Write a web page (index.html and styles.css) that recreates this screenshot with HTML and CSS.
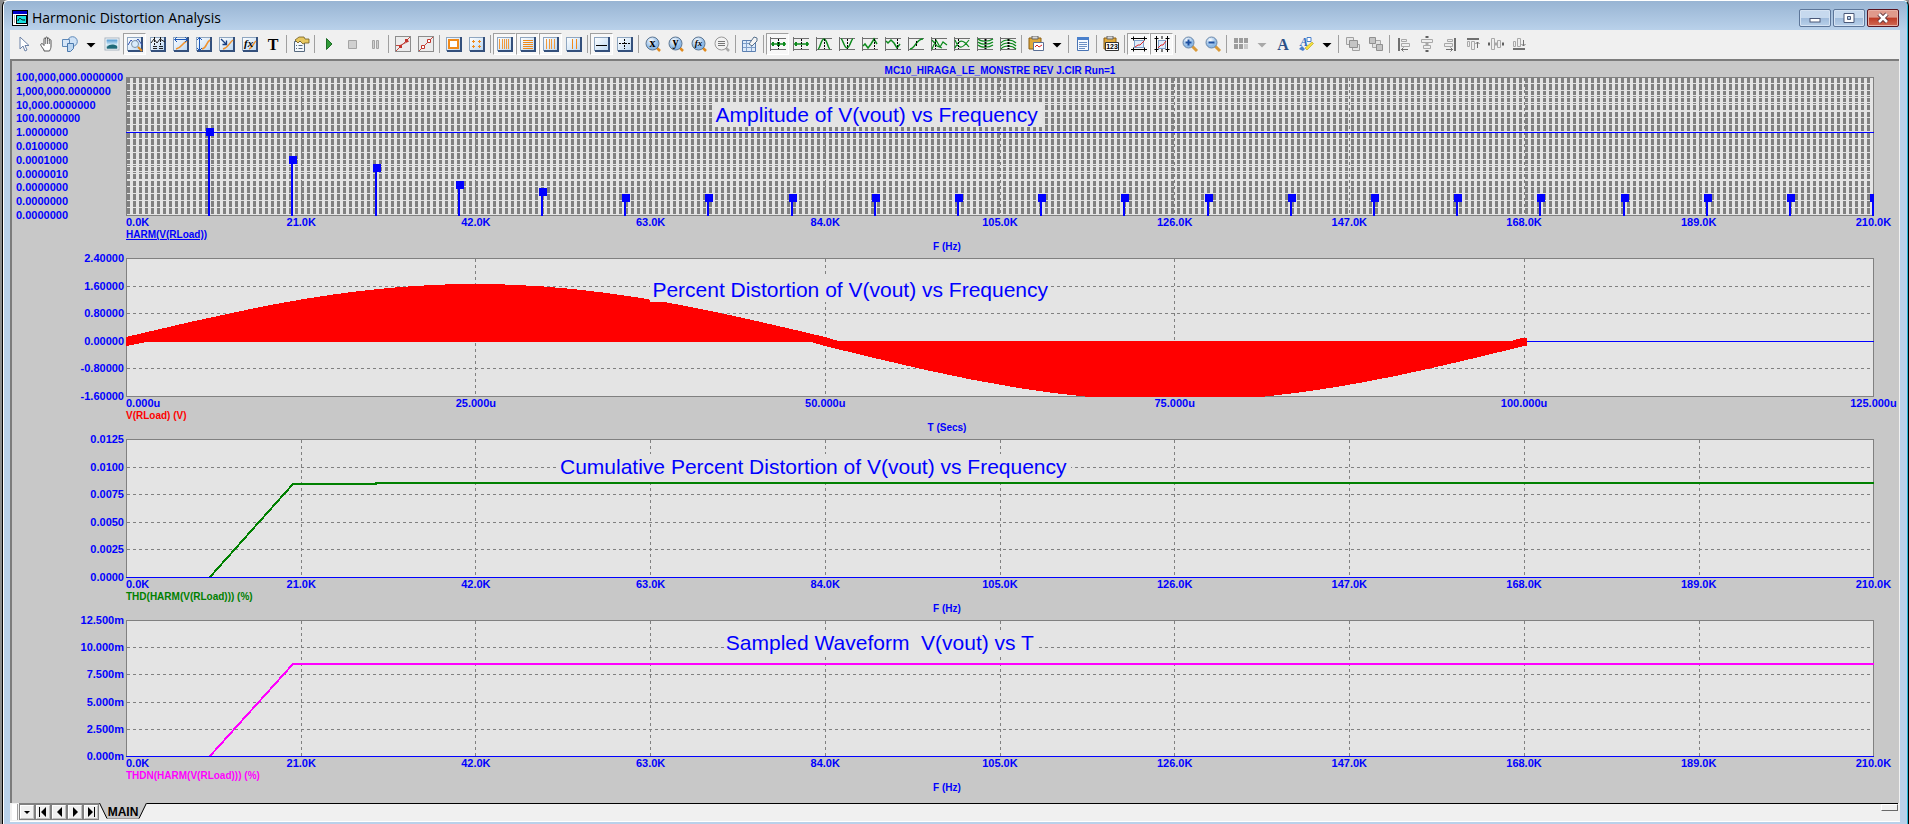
FILE: index.html
```html
<!DOCTYPE html>
<html lang="en">
<head>
<meta charset="utf-8">
<title>Harmonic Distortion Analysis</title>
<link rel="stylesheet" href="styles.css">
</head>
<body>
<svg class="sprite" aria-hidden="true">
  <defs>
    <linearGradient id="pane" x1="0" y1="0" x2="1" y2="1"><stop offset="0" stop-color="#ffffff"/><stop offset="1" stop-color="#bcd8f2"/></linearGradient>
    <linearGradient id="sky" x1="0" y1="0" x2="0" y2="1"><stop offset="0" stop-color="#4f97d0"/><stop offset=".6" stop-color="#d8eef8"/><stop offset="1" stop-color="#2b6f86"/></linearGradient>
    <radialGradient id="ball" cx=".4" cy=".3"><stop offset="0" stop-color="#ffffff"/><stop offset="1" stop-color="#8db9e6"/></radialGradient>
  </defs>
  <symbol id="frame" viewBox="0 0 16 16"><rect x=".5" y="1.500" width="14" height="13" fill="url(#pane)" stroke="#8fa6c0"/><path d="M1 15h15M15 1v14" stroke="#34507c" stroke-width="2" fill="none"/></symbol>
  <symbol id="graph" viewBox="0 0 16 16"><path d="M.5 1v14M0 2.500h16M0 13.500h16" stroke="#707070" fill="none"/></symbol>
  <symbol id="lens" viewBox="0 0 16 16"><path d="M12 12l3 3" stroke="#e08a1e" stroke-width="2.500"/><circle cx="7.500" cy="7.500" r="6.500" fill="url(#ball)" stroke="#5f7893"/></symbol>
  <symbol id="clip" viewBox="0 0 16 16"><path d="M1 2h12v11H1z" fill="#e0a93a" stroke="#8a5f14"/><path d="M4 0h6v3H4z" fill="#d9d9d9" stroke="#666"/></symbol>
</svg>

<main class="window">
  <header class="titlebar">
    <svg class="app-icon" viewBox="0 0 16 16" aria-hidden="true"><rect x=".5" y=".5" width="15" height="15" fill="#fff" stroke="#000"/><path d="M1 1h14v3H1z" fill="#0000c8"/><path d="M2 6h1M2 8h1M2 10h1M2 12h1" stroke="#777"/><rect x="4.500" y="5.500" width="10" height="8" fill="#19e0e0" stroke="#000"/><path d="M6 11c1-3 2-3 3-2s2 1 4 1" stroke="#000" fill="none"/></svg>
    <h1>Harmonic Distortion Analysis</h1>
    <div class="window-buttons">
      <button aria-label="Minimize"><svg viewBox="0 0 12 12"><rect x="1" y="6.500" width="10" height="3.500" fill="#fff" stroke="#4a5878"/></svg></button>
      <button aria-label="Maximize"><svg viewBox="0 0 12 12"><path fill-rule="evenodd" d="M1 1.500h10v9H1zM4.500 4.500v3h3v-3z" fill="#fff" stroke="#4a5878"/></svg></button>
      <button class="close" aria-label="Close"><svg viewBox="0 0 12 12"><path d="M2 2l8 8M10 2l-8 8" stroke="#5a3038" stroke-width="4.500"/><path d="M2 2l8 8M10 2l-8 8" stroke="#fff" stroke-width="2.500"/></svg></button>
    </div>
  </header>

  <div class="client">
    <nav class="toolbar" aria-label="Analysis tools">
      <button aria-label="Select"><svg viewBox="0 0 16 16"><path d="M4 1v12l3-3 2 5 2-1-2-4.500h4z" fill="#fff" stroke="#6d83a8"/></svg></button>
      <button aria-label="Pan"><svg viewBox="0 0 16 16"><path d="M5 14C3 11 1 9 2 8s2 0 3 1.500V3c0-1.300 1.700-1.300 1.700 0V2c0-1.300 1.800-1.300 1.800 0v1c0-1.200 1.800-1.200 1.800 0v1.500c0-1.200 1.700-1.200 1.700 0V10c0 2-.500 3-1.500 5H5z" fill="#fff" stroke="#555"/><path d="M6.700 3v5M8.500 3v5M10.300 4v4" stroke="#777"/></svg></button>
      <button aria-label="Shapes"><svg viewBox="0 0 16 16"><circle cx="10.500" cy="5.500" r="4.800" fill="#cfe2f6" stroke="#5d88b8"/><path d="M.5 3.500h7v7h-7z" fill="#d6e6f8" stroke="#5d88b8"/><path d="M5.500 7.500h6v5l-3 3h-3z" fill="#bcd6f0" stroke="#4a78ac"/></svg></button>
      <button class="drop" aria-label="More shapes"><svg viewBox="0 0 10 16"><path d="M.5 7h9L5 11.500z"/></svg></button>
      <button aria-label="Picture"><svg viewBox="0 0 16 16"><rect x="1" y="2" width="14" height="12" fill="#fff" stroke="#a8b4c0"/><rect x="2.500" y="3.500" width="11" height="9" fill="url(#sky)"/><path d="M3 11c3-3 6-3 10-1v2.500H3z" fill="#1f6a78"/></svg></button>
      <button class="on" aria-label="Scale mode"><svg viewBox="0 0 16 16"><use href="#frame"/><path d="M1 9l3-5 3 3 4-4 4 6" stroke="#3453b0" fill="none"/><circle cx="8" cy="8" r="3.500" fill="#d9ebfb" stroke="#7d93a8"/><path d="M11 11l4 4" stroke="#e08a1e" stroke-width="2"/></svg></button>
      <button aria-label="Cursor mode"><svg viewBox="0 0 16 16"><use href="#frame"/><path d="M1 7l3-4 3 4 3-4 5 3" stroke="#222" fill="none"/><path d="M4.500 1v8M10.500 1v8" stroke="#111" stroke-dasharray="2 1"/><path d="M3 10.500h4M9 10.500h4M3 12.500h4M9 12.500h4" stroke="#222"/></svg></button>
      <button aria-label="Horizontal tag"><svg viewBox="0 0 16 16"><use href="#frame"/><path d="M3 13c6-1 6-6 11-8" stroke="#f0922c" stroke-width="1.500" fill="none"/><path d="M2 3.500h12M4 1L1.500 3.500 4 6M12 1l2.500 2.500L12 6" stroke="#1c57b8" fill="none"/></svg></button>
      <button aria-label="Vertical tag"><svg viewBox="0 0 16 16"><use href="#frame"/><path d="M6 13c5-1 4-7 8-9" stroke="#f0922c" stroke-width="1.500" fill="none"/><path d="M3.500 1v14M1 4l2.500-2.500L6 4M1 12l2.500 2.500L6 12" stroke="#1c57b8" fill="none"/></svg></button>
      <button aria-label="Tag"><svg viewBox="0 0 16 16"><use href="#frame"/><path d="M4 13c5-1 6-6 10-9" stroke="#f0922c" stroke-width="1.500" fill="none"/><path d="M2 3l5 5M7.500 4.500V8.500H3.500" stroke="#173e80" stroke-width="1.300" fill="none"/></svg></button>
      <button aria-label="Performance tag"><svg viewBox="0 0 16 16"><use href="#frame"/><path d="M7 13c4-1 4-6 7-8" stroke="#f0922c" stroke-width="1.500" fill="none"/><text x="2" y="11" class="glyph-fx">fx</text></svg></button>
      <button aria-label="Text"><svg viewBox="0 0 16 16"><text x="8" y="14" class="glyph-t">T</text></svg></button>
      <span class="sep"></span>
      <button aria-label="Properties"><svg viewBox="0 0 16 16"><path d="M1.500 5.500h10v10h-10z" fill="#f4f8fc" stroke="#56697e"/><path d="M3 9.500h1M5.500 9.500h4M3 12.500h1M5.500 12.500h4" stroke="#56697e"/><path d="M2 4l4-3h5l1 2h4v4h-4l-2 1-3-3-2 2z" fill="#e8c860" stroke="#6e5a20" stroke-width=".8"/></svg></button>
      <span class="sep"></span>
      <button aria-label="Run"><svg viewBox="0 0 16 16"><path d="M5.500 2.500v11l5.500-5.500z" fill="#2f9a38" stroke="#1d6e26"/></svg></button>
      <button aria-label="Stop"><svg viewBox="0 0 16 16"><path d="M4.500 4.500h8v8h-8z" fill="#d0d0d0" stroke="#a4a4a4"/></svg></button>
      <button aria-label="Pause"><svg viewBox="0 0 16 16"><path d="M5.500 4.500h2v8h-2zM9.500 4.500h2v8h-2z" fill="#d0d0d0" stroke="#a4a4a4"/></svg></button>
      <span class="sep"></span>
      <button aria-label="Data points"><svg viewBox="0 0 16 16"><rect x=".5" y=".5" width="15" height="15" fill="#ececec" stroke="#8c8c8c"/><path d="M1 15L15 1M1 9.500h4L14 5" stroke="#c24a42" fill="none"/><path d="M4 9h3v3H4zM10 3h3v3h-3z" fill="#c2342c"/></svg></button>
      <button aria-label="Tokens"><svg viewBox="0 0 16 16"><rect x=".5" y=".5" width="15" height="15" fill="#ececec" stroke="#8c8c8c"/><path d="M1 15L15 1" stroke="#c24a42"/><path d="M3.500 9.500h3v3h-3zM9.500 3.500h3v3h-3z" fill="#fff" stroke="#c2342c"/></svg></button>
      <span class="sep"></span>
      <button aria-label="Ruler"><svg viewBox="0 0 16 16"><use href="#frame"/><rect x="3" y="4" width="9" height="8" fill="#fff" stroke="#f08a1c" stroke-width="2"/></svg></button>
      <button aria-label="Plus marks"><svg viewBox="0 0 16 16"><use href="#frame"/><path d="M3 5.500h3M4.500 4v3M9 5.500h3M10.500 4v3M3 10.500h3M4.500 9v3M9 10.500h3M10.500 9v3" stroke="#f08a1c"/></svg></button>
      <span class="sep"></span>
      <button class="on" aria-label="Horizontal axis grids"><svg viewBox="0 0 16 16"><use href="#frame"/><path d="M2.500 3v10M5.500 3v10M7.500 3v10M9.500 3v10M11.500 3v10" stroke="#f09a3c"/></svg></button>
      <button class="on" aria-label="Vertical axis grids"><svg viewBox="0 0 16 16"><use href="#frame"/><path d="M3 4.500h10M3 6.500h10M3 8.500h10M3 10.500h10M3 12.500h10" stroke="#f08a1c"/></svg></button>
      <button class="on" aria-label="Minor log grids"><svg viewBox="0 0 16 16"><use href="#frame"/><path d="M3.500 3v10M6.500 3v10M8.500 3v10M11.500 3v10" stroke="#f09a3c"/></svg></button>
      <button aria-label="Major log grids"><svg viewBox="0 0 16 16"><use href="#frame"/><path d="M6.500 3v10M10.500 3v10" stroke="#f08a1c"/></svg></button>
      <span class="sep"></span>
      <button class="on" aria-label="Baseline"><svg viewBox="0 0 16 16"><use href="#frame"/><path d="M2 9.500h11" stroke="#000"/></svg></button>
      <button aria-label="Horizontal cursor"><svg viewBox="0 0 16 16"><use href="#frame"/><path d="M2 7.500h11M7.500 3v10" stroke="#000" stroke-dasharray="2 1"/></svg></button>
      <span class="sep"></span>
      <button aria-label="Go to X"><svg viewBox="0 0 16 16"><use href="#lens"/><text x="7.500" y="11" class="glyph-lens">x</text></svg></button>
      <button aria-label="Go to Y"><svg viewBox="0 0 16 16"><use href="#lens"/><text x="7.500" y="10" class="glyph-lens">y</text></svg></button>
      <button aria-label="Go to performance"><svg viewBox="0 0 16 16"><use href="#lens"/><text x="7.500" y="10" class="glyph-lens slim">fx</text></svg></button>
      <button aria-label="Go to branch"><svg viewBox="0 0 16 16"><path d="M12 12l3 3" stroke="#aaa" stroke-width="2.500"/><circle cx="7.500" cy="7.500" r="6.500" fill="#f2f2f2" stroke="#999"/><path d="M4 5.500h7M4 7.500h7M4 9.500h7" stroke="#777"/></svg></button>
      <span class="sep"></span>
      <button aria-label="Clear accumulated plots"><svg viewBox="0 0 16 16"><path d="M.5 4.500h13v11H.5z" fill="#dceafa" stroke="#5b7fb0"/><path d="M1 7.500h12M1 11.500h12M4.500 5v10M9.500 5v10" stroke="#7f9fca"/><path d="M7 8l5-7 3 1v3l-5 5z" fill="#f4f4f4" stroke="#56708c"/></svg></button>
      <span class="sep"></span>
      <button class="on" aria-label="Next simulation point"><svg viewBox="0 0 16 16"><use href="#graph"/><path d="M1 8h15" stroke="#0c8a1c" stroke-width="1.500"/><path d="M2 6h2v4H2zM7 6h3v4H7zM13 6h2v4h-2z" fill="#0c8a1c"/><path d="M8.500 3v10" stroke="#000" stroke-dasharray="2 1"/></svg></button>
      <button aria-label="Next interpolated point"><svg viewBox="0 0 16 16"><use href="#graph"/><path d="M1 8h15" stroke="#0c8a1c" stroke-width="1.500"/><path d="M2 6h2v4H2zM13 6h2v4h-2z" fill="#0c8a1c"/><path d="M8.500 3v10" stroke="#000" stroke-dasharray="2 1"/></svg></button>
      <button aria-label="Peak"><svg viewBox="0 0 16 16"><use href="#graph"/><path d="M2 13c2 0 3-10 6-10s4 10 6 10" stroke="#0c8a1c" stroke-width="1.500" fill="none"/><path d="M8.500 3v10" stroke="#000" stroke-dasharray="2 1"/></svg></button>
      <button aria-label="Valley"><svg viewBox="0 0 16 16"><use href="#graph"/><path d="M2 3c2 0 3 9 6 9s4-9 6-9" stroke="#0c8a1c" stroke-width="1.500" fill="none"/><path d="M8.500 3v10" stroke="#000" stroke-dasharray="2 1"/></svg></button>
      <button aria-label="High"><svg viewBox="0 0 16 16"><use href="#graph"/><path d="M1 10l2-2 3 4 3-4 3-5 3 5" stroke="#0c8a1c" stroke-width="1.500" fill="none"/><path d="M12.500 3v10" stroke="#000" stroke-dasharray="2 1"/></svg></button>
      <button aria-label="Low"><svg viewBox="0 0 16 16"><use href="#graph"/><path d="M1 5l2 2 3-3 3 3 3 5 3-4" stroke="#0c8a1c" stroke-width="1.500" fill="none"/><path d="M12.500 3v10" stroke="#000" stroke-dasharray="2 1"/></svg></button>
      <button aria-label="Inflection"><svg viewBox="0 0 16 16"><use href="#graph"/><path d="M2 13c5 0 6-10 13-10" stroke="#0c8a1c" stroke-width="1.500" fill="none"/><path d="M8.500 5v6" stroke="#000" stroke-dasharray="2 1"/></svg></button>
      <button aria-label="Global high"><svg viewBox="0 0 16 16"><use href="#graph"/><path d="M1 13l4-9 4 7 3-5 4 3M1 4l5 6 5 2" stroke="#0c8a1c" stroke-width="1.200" fill="none"/><path d="M4.500 3v10" stroke="#000" stroke-dasharray="2 1"/></svg></button>
      <button aria-label="Global low"><svg viewBox="0 0 16 16"><use href="#graph"/><path d="M1 4c4 10 7 9 14 0M1 12c4-9 8-9 14-1" stroke="#0c8a1c" stroke-width="1.200" fill="none"/><path d="M4.500 3v10" stroke="#000" stroke-dasharray="2 1"/></svg></button>
      <button aria-label="Top branch"><svg viewBox="0 0 16 16"><use href="#graph"/><path d="M1 3c3 3 11 3 15 0M1 6c3 3 11 3 15 0M1 9c3 3 11 3 15 0" stroke="#0c8a1c" stroke-width="1.200" fill="none"/><path d="M8.500 3v10" stroke="#000" stroke-width="2" stroke-dasharray="2 1"/></svg></button>
      <button aria-label="Bottom branch"><svg viewBox="0 0 16 16"><use href="#graph"/><path d="M1 7c3-4 11-4 15 0M1 10c3-4 11-4 15 0M1 13c3-4 11-4 15 0" stroke="#0c8a1c" stroke-width="1.200" fill="none"/><path d="M8.500 3v10" stroke="#000" stroke-width="2" stroke-dasharray="2 1"/></svg></button>
      <span class="sep"></span>
      <button aria-label="Copy plot"><svg viewBox="0 0 16 16"><use href="#clip"/><path d="M5.500 6.500h10v8h-10z" fill="#fff" stroke="#5a6f94"/><path d="M7 11l2-2 2 2 3-2" stroke="#d22" fill="none"/></svg></button>
      <button class="drop" aria-label="Copy options"><svg viewBox="0 0 10 16"><path d="M.5 7h9L5 11.500z"/></svg></button>
      <span class="sep"></span>
      <button aria-label="Numeric output"><svg viewBox="0 0 16 16"><path d="M2.500 1.500h11v13h-11z" fill="#f6faff" stroke="#4a74b4"/><path d="M2 1h12v3H2z" fill="#4a80cc"/><path d="M4 6.500h8M4 8.500h8M4 10.500h8M4 12.500h6" stroke="#6c8fc4"/></svg></button>
      <span class="sep"></span>
      <button aria-label="Copy values"><svg viewBox="0 0 16 16"><use href="#clip"/><path d="M2.500 6.500h13v8h-13z" fill="#fff" stroke="#333"/><text x="9" y="13" class="glyph-num">123</text></svg></button>
      <span class="sep"></span>
      <button class="on" aria-label="Same Y scales"><svg viewBox="0 0 16 16"><rect x="3.500" y="4.500" width="9" height="7" fill="#dcecfb" stroke="#7f9fca"/><path d="M4 11l3-2 2 0 4-4" stroke="#d22" fill="none"/><path d="M0 2.500h16M0 13.500h16M2.500 .5v4M13.500 .5v4M2.500 11.500v4M13.500 11.500v4" stroke="#000"/></svg></button>
      <button class="on" aria-label="Same X scales"><svg viewBox="0 0 16 16"><rect x="4.500" y="4.500" width="7" height="8" fill="#dcecfb" stroke="#7f9fca"/><path d="M4 12l3-3 2 0 3-4" stroke="#d22" fill="none"/><path d="M2.500 0v16M13.500 0v16M.5 2.500h4M11.500 2.500h4M.5 13.500h4M11.500 13.500h4M8 0v3M8 13v3" stroke="#000"/></svg></button>
      <span class="sep"></span>
      <button aria-label="Zoom in"><svg viewBox="0 0 16 16"><path d="M10 10l5 5" stroke="#d99a3a" stroke-width="3"/><circle cx="6.500" cy="6.500" r="5.500" fill="url(#ball)" stroke="#6c87a8"/><path d="M3.500 6.500h6M6.500 3.500v6" stroke="#1c4fa0" stroke-width="2"/></svg></button>
      <button aria-label="Zoom out"><svg viewBox="0 0 16 16"><path d="M10 10l5 5" stroke="#d99a3a" stroke-width="3"/><circle cx="6.500" cy="6.500" r="5.500" fill="url(#ball)" stroke="#6c87a8"/><path d="M3.500 6.500h6" stroke="#1c4fa0" stroke-width="2"/></svg></button>
      <span class="sep"></span>
      <button aria-label="Color grid"><svg viewBox="0 0 16 16"><path d="M1 2h4v5H1zM6 2h4v5H6zM11 2h4v5h-4zM1 8h4v5H1zM6 8h4v5H6z" fill="#9c9c9c"/><path d="M11 8h4v5h-4z" fill="#c8c8c8"/></svg></button>
      <button class="drop dim" aria-label="Color options"><svg viewBox="0 0 10 16"><path d="M.5 7h9L5 11.500z"/></svg></button>
      <button aria-label="Font"><svg viewBox="0 0 16 16"><text x="8" y="14" class="glyph-a">A</text></svg></button>
      <button aria-label="Text style"><svg viewBox="0 0 16 16"><text x="6" y="10" class="glyph-style">A</text><path d="M9 1.500h4v4H9z" fill="#fff" stroke="#4a80cc"/><path d="M7 12l7-6 1.500 1.500L9 14z" fill="#f4e03c" stroke="#b09c1c" stroke-width=".6"/><path d="M1 13l3-3 3 3-2 2z" fill="#4a80cc"/></svg></button>
      <button class="drop" aria-label="Style options"><svg viewBox="0 0 10 16"><path d="M.5 7h9L5 11.500z"/></svg></button>
      <span class="sep"></span>
      <button aria-label="Bring to front"><svg viewBox="0 0 16 16"><path d="M1.500 1.500h7v7h-7zM7.500 8.500h7v6h-7z" fill="#e6e6e6" stroke="#a0a0a0"/><path d="M4.500 4.500h8v7h-8z" fill="#c4c4c4" stroke="#909090"/></svg></button>
      <button aria-label="Send to back"><svg viewBox="0 0 16 16"><path d="M4.500 4.500h8v7h-8z" fill="#e2e2e2" stroke="#a8a8a8"/><path d="M1.500 1.500h6v6h-6zM8.500 8.500h6v6h-6z" fill="#c4c4c4" stroke="#909090"/></svg></button>
      <span class="sep"></span>
      <button aria-label="Align left"><svg viewBox="0 0 16 16"><path d="M2 2h2v13H2z" fill="#707070"/><path d="M5.500 3.500h5v2h-5zM5.500 7.500h8v3h-8z" fill="#eee" stroke="#a8a8a8"/><path d="M5 13.500h7M7.500 11.500l-2 2 2 2" stroke="#707070" fill="none"/></svg></button>
      <button aria-label="Center vertically"><svg viewBox="0 0 16 16"><path d="M6.500 0h3v2h-3zM6.500 14h3v2h-3zM6.500 7.500h3v1h-3z" fill="#606060"/><path d="M2.500 3.500h11v3h-11zM4.500 9.500h7v3h-7z" fill="#eee" stroke="#a8a8a8"/></svg></button>
      <button aria-label="Align right"><svg viewBox="0 0 16 16"><path d="M12 2h2v13h-2z" fill="#707070"/><path d="M5.500 3.500h5v2h-5zM2.500 7.500h8v3h-8z" fill="#eee" stroke="#a8a8a8"/><path d="M4 13.500h7M8.500 11.500l2 2-2 2" stroke="#707070" fill="none"/></svg></button>
      <button aria-label="Align top"><svg viewBox="0 0 16 16"><path d="M2 2h12v2H2z" fill="#707070"/><path d="M2.500 5.500h2v5h-2zM6.500 5.500h3v8h-3z" fill="#eee" stroke="#a8a8a8"/><path d="M12.500 12V6M10.500 8l2-2 2 2" stroke="#707070" fill="none"/></svg></button>
      <button aria-label="Center horizontally"><svg viewBox="0 0 16 16"><path d="M0 6.500h2v3H0zM14 6.500h2v3h-2zM7.500 6.500h1v3h-1z" fill="#606060"/><path d="M3.500 2.500h3v11h-3zM9.500 4.500h3v7h-3z" fill="#eee" stroke="#a8a8a8"/></svg></button>
      <button aria-label="Align bottom"><svg viewBox="0 0 16 16"><path d="M2 12h12v2H2z" fill="#707070"/><path d="M2.500 5.500h2v5h-2zM6.500 2.500h3v8h-3z" fill="#eee" stroke="#a8a8a8"/><path d="M12.500 4v6M10.500 8l2 2 2-2" stroke="#707070" fill="none"/></svg></button>
    </nav>

    <div class="plots">
      <h2 class="run-title">MC10_HIRAGA_LE_MONSTRE REV J.CIR Run=1</h2>

      <section class="chart">
        <ul class="y-axis start">
          <li>100,000,000.0000000</li><li>1,000,000.0000000</li><li>10,000.0000000</li><li>100.0000000</li><li>1.0000000</li><li>0.0100000</li><li>0.0001000</li><li>0.0000010</li><li>0.0000000</li><li>0.0000000</li><li>0.0000000</li>
        </ul>
        <div class="plot">
          <svg viewBox="0 0 1748 139" preserveAspectRatio="none" aria-hidden="true">
            <defs><pattern id="ticks" width="6" height="139" patternUnits="userSpaceOnUse"><rect x="1" width="3" height="139" fill="#808080"/></pattern></defs>
            <rect width="1748" height="139" fill="url(#ticks)"/>
            <path class="gaps" d="M0 6.500H1748M0 13.500H1748M0 18.500H1748M0 20.500H1748M0 25.500H1748M0 27.500H1748M0 33.500H1748M0 34.500H1748M0 40.500H1748M0 47.500H1748M0 54.500H1748M0 61.500H1748M0 68.500H1748M0 75.500H1748M0 82.500H1748M0 87.500H1748M0 89.500H1748M0 94.500H1748M0 96.500H1748M0 102.500H1748M0 103.500H1748M0 109.500H1748M0 116.500H1748M0 123.500H1748M0 130.500H1748M0 137.500H1748"/>
            <path class="grid" d="M175.500 1V138M349.500 1V138M524.500 1V138M699.500 1V138M874.500 1V138M1048.500 1V138M1223.500 1V138M1398.500 1V138M1573.500 1V138"/>
            <rect class="edge" x=".5" y=".5" width="1747" height="138"/>
            <path class="zero" d="M0 55.500H1748"/>
            <path class="stems" d="M83 55V139M166 83V139M250 91V139M333 108V139M416 115V139M499 121V139M582 121V139M666 121V139M749 121V139M832 121V139M915 121V139M998 121V139M1082 121V139M1165 121V139M1248 121V139M1331 121V139M1414 121V139M1498 121V139M1581 121V139M1664 121V139M1747 121V139"/>
            <path class="heads" d="M80 55h8M163 83h8M247 91h8M330 108h8M413 115h8M496 121h8M579 121h8M663 121h8M746 121h8M829 121h8M912 121h8M995 121h8M1079 121h8M1162 121h8M1245 121h8M1328 121h8M1411 121h8M1495 121h8M1578 121h8M1661 121h8M1744 121h8"/>
          </svg>
          <h3 class="caption amplitude">Amplitude of V(vout) vs Frequency</h3>
        </div>
        <ul class="x-axis"><li>0.0K</li><li>21.0K</li><li>42.0K</li><li>63.0K</li><li>84.0K</li><li>105.0K</li><li>126.0K</li><li>147.0K</li><li>168.0K</li><li>189.0K</li><li>210.0K</li></ul>
        <p class="trace selected">HARM(V(RLoad))</p>
        <p class="axis-name">F (Hz)</p>
      </section>

      <section class="chart">
        <ul class="y-axis"><li>2.40000</li><li>1.60000</li><li>0.80000</li><li>0.00000</li><li>-0.80000</li><li>-1.60000</li></ul>
        <div class="plot">
          <svg viewBox="0 0 1748 139" preserveAspectRatio="none" aria-hidden="true">
            <path class="grid" d="M1 28.500H1747M1 55.500H1747M1 110.500H1747M349.500 1V138M699.500 1V138M1048.500 1V138M1398.500 1V138"/>
            <rect class="edge" x=".5" y=".5" width="1747" height="138"/>
            <path class="zero" d="M0 83.500H1748"/>
            <path class="wave" d="M0 79C114 52 223 26 349.500 26S585 52 699 79L716 84H20L0 88z"/>
            <path class="wave" d="M682 83L699 88C813 116 922 143 1048.500 143S1284 116 1398 88H1401V80H1396L1385 83z"/>
          </svg>
          <h3 class="caption percent">Percent Distortion of V(vout) vs Frequency</h3>
        </div>
        <ul class="x-axis"><li>0.000u</li><li>25.000u</li><li>50.000u</li><li>75.000u</li><li>100.000u</li><li>125.000u</li></ul>
        <p class="trace red">V(RLoad) (V)</p>
        <p class="axis-name">T (Secs)</p>
      </section>

      <section class="chart">
        <ul class="y-axis"><li>0.0125</li><li>0.0100</li><li>0.0075</li><li>0.0050</li><li>0.0025</li><li>0.0000</li></ul>
        <div class="plot">
          <svg viewBox="0 0 1748 139" preserveAspectRatio="none" aria-hidden="true">
            <path class="grid" d="M1 28.500H1747M1 55.500H1747M1 83.500H1747M1 110.500H1747M175.500 1V138M349.500 1V138M524.500 1V138M699.500 1V138M874.500 1V138M1048.500 1V138M1223.500 1V138M1398.500 1V138M1573.500 1V138"/>
            <rect class="edge" x=".5" y=".5" width="1747" height="138"/>
            <path class="line thd" d="M84 138L167 45H250V44H1748"/>
            <path class="zero" d="M0 138.500H1748"/>
          </svg>
          <h3 class="caption cumulative">Cumulative Percent Distortion of V(vout) vs Frequency</h3>
        </div>
        <ul class="x-axis"><li>0.0K</li><li>21.0K</li><li>42.0K</li><li>63.0K</li><li>84.0K</li><li>105.0K</li><li>126.0K</li><li>147.0K</li><li>168.0K</li><li>189.0K</li><li>210.0K</li></ul>
        <p class="trace green">THD(HARM(V(RLoad))) (%)</p>
        <p class="axis-name">F (Hz)</p>
      </section>

      <section class="chart last">
        <ul class="y-axis"><li>12.500m</li><li>10.000m</li><li>7.500m</li><li>5.000m</li><li>2.500m</li><li>0.000m</li></ul>
        <div class="plot">
          <svg viewBox="0 0 1748 137" preserveAspectRatio="none" aria-hidden="true">
            <path class="grid" d="M1 27.500H1747M1 54.500H1747M1 82.500H1747M1 109.500H1747M175.500 1V136M349.500 1V136M524.500 1V136M699.500 1V136M874.500 1V136M1048.500 1V136M1223.500 1V136M1398.500 1V136M1573.500 1V136"/>
            <rect class="edge" x=".5" y=".5" width="1747" height="136"/>
            <path class="line thdn" d="M84 136L167 44H1748"/>
            <path class="zero" d="M0 136.500H1748"/>
          </svg>
          <h3 class="caption sampled">Sampled Waveform  V(vout) vs T</h3>
        </div>
        <ul class="x-axis"><li>0.0K</li><li>21.0K</li><li>42.0K</li><li>63.0K</li><li>84.0K</li><li>105.0K</li><li>126.0K</li><li>147.0K</li><li>168.0K</li><li>189.0K</li><li>210.0K</li></ul>
        <p class="trace magenta">THDN(HARM(V(RLoad))) (%)</p>
        <p class="axis-name">F (Hz)</p>
      </section>
    </div>

    <footer class="tabs">
      <span class="grip"></span>
      <div class="tab-nav">
        <button aria-label="Page list"><svg viewBox="0 0 12 12"><path d="M3 5h6L6 8z"/></svg></button>
        <button aria-label="First page"><svg viewBox="0 0 12 12"><path d="M2 1h1v10H2zM9 1v10L4 6z"/></svg></button>
        <button aria-label="Previous page"><svg viewBox="0 0 12 12"><path d="M9 1v10L4 6z"/></svg></button>
        <button aria-label="Next page"><svg viewBox="0 0 12 12"><path d="M4 1v10l5-5z"/></svg></button>
        <button aria-label="Last page"><svg viewBox="0 0 12 12"><path d="M3 1v10l5-5zM9 1h1v10H9z"/></svg></button>
      </div>
      <button class="tab">
        <svg viewBox="0 0 48 17" preserveAspectRatio="none" aria-hidden="true"><path d="M0 0L8 15.500H40L48 0z" fill="#c8c8c8"/><path d="M8 15.500H40" stroke="#a0a0a0"/><path d="M.5 0L8 15.500M40 15.500L47.500 0" stroke="#000" fill="none"/></svg>
        <span>MAIN</span>
      </button>
      <div class="tab-rest"><span class="splitter"></span></div>
    </footer>
  </div>
</main>
</body>
</html>
```

FILE: styles.css
```css
* { box-sizing: border-box; }

body {
  margin: 0;
  background: #8c8c8c;
  font-family: "Liberation Sans", Arial, sans-serif;
}

ul, h1, h2, h3, p { margin: 0; padding: 0; }
ul { list-style: none; }

button {
  margin: 0;
  padding: 0;
  border: 0;
  background: none;
  font: inherit;
}

svg { display: block; }

.sprite { position: absolute; width: 0; height: 0; }

/* Window frame */
.window {
  display: flex;
  flex-direction: column;
  height: 100vh;
  min-height: 600px;
  margin-left: 2px;
  padding: 0 8px 2px 6px;
  border-left: 1px solid #000;
  border-right: 1px solid #000;
  border-top: 1px solid #fff;
  border-radius: 6px 6px 0 0;
  background: #b9d1ea;
  box-shadow: inset 1px 0 #fff, inset -1px 0 #27b8d8;
}

.titlebar {
  display: flex;
  align-items: center;
  flex: none;
  height: 29px;
  margin: 0 -7px 0 -5px;
  padding: 5px 8px 0 8px;
  border-radius: 5px 5px 0 0;
  background: linear-gradient(#98b4d3, #b9d1ea);
}

.app-icon { width: 16px; height: 16px; }

.titlebar h1 {
  flex: 1;
  margin-left: 4px;
  font: 400 14px/20px "Open Sans", sans-serif;
  color: #000;
}

.window-buttons { display: flex; gap: 2px; }

.window-buttons button {
  display: grid;
  place-items: center;
  width: 32px;
  height: 18px;
  border: 1px solid #5d7699;
  border-radius: 2px;
  background: linear-gradient(#c6d9ee 50%, #9fbbdb 50%, #b9d1ea);
  box-shadow: inset 0 0 0 1px #d5e3f3;
}

.window-buttons .close {
  border-color: #5a1420;
  background: linear-gradient(#e09a8c 45%, #bf3b26 50%, #d06a55);
  box-shadow: inset 0 0 0 1px #e8b0a5;
}

.window-buttons svg { width: 12px; height: 12px; }

.client {
  display: flex;
  flex: 1;
  flex-direction: column;
  min-height: 0;
  margin-left: 1px;
  border-bottom: 1px solid #fff;
  background: #f0f0f0;
}

/* Toolbar */
.toolbar {
  display: flex;
  align-items: flex-start;
  flex: none;
  height: 29px;
  padding: 3px 0 0 2px;
}

.toolbar button {
  display: grid;
  place-items: center;
  flex: none;
  width: 23px;
  height: 22px;
}

.toolbar button svg { width: 16px; height: 16px; overflow: visible; }

.toolbar .on {
  border: 1px solid;
  border-color: #a0a0a0 #fff #fff #a0a0a0;
  background: #f8f8f8;
}

.toolbar .drop { width: 19px; }
.toolbar .drop svg { width: 10px; }
.toolbar .dim path { fill: #a8a8a8; }

.sep {
  flex: none;
  width: 1px;
  height: 18px;
  margin: 2px 2px 0;
  background: #a0a0a0;
}

.glyph-t { font: 700 16px "Liberation Serif", serif; text-anchor: middle; }
.glyph-fx { font: italic 700 11px "Liberation Serif", serif; }
.glyph-lens { font: 700 12px "Liberation Serif", serif; text-anchor: middle; }
.slim { font-size: 9px; font-style: italic; }
.glyph-num { font: 700 7px "Liberation Sans", sans-serif; text-anchor: middle; }
.glyph-a { font: 700 16px "Liberation Serif", serif; text-anchor: middle; fill: #2c4f86; }
.glyph-style { font: italic 700 12px "Liberation Serif", serif; text-anchor: middle; fill: #2c6cc0; }

/* Plot area */
.plots {
  display: grid;
  flex: 1;
  grid-template-rows: 16px repeat(4, minmax(0, 1fr));
  min-height: 0;
  margin-right: 1px;
  padding-bottom: 2px;
  border: solid #7c7c7c;
  border-width: 2px 0 0 2px;
  background: #c8c8c8;
  color: #0000ff;
  font-size: 10px;
  font-weight: 700;
}

.run-title {
  padding: 4px 25px 0 114px;
  font-size: 10px;
  line-height: 12px;
  text-align: center;
}

.chart {
  display: grid;
  grid-template-columns: 114px 1fr;
  grid-template-rows: 1fr 13px 12px 12px;
  min-height: 0;
  padding: 0 25px 5px 0;
}

.chart.last { padding-bottom: 7px; }

.y-axis {
  display: flex;
  flex-direction: column;
  justify-content: space-between;
  padding-right: 2px;
  font-size: 11px;
  text-align: right;
}

.y-axis.start { padding-left: 4px; text-align: left; }

.y-axis li { height: 1px; line-height: 1px; white-space: nowrap; }

.plot { position: relative; min-height: 0; background: #e4e4e4; }

.plot svg {
  position: absolute;
  inset: 0;
  width: 100%;
  height: 100%;
  fill: none;
  shape-rendering: crispEdges;
}

.grid { stroke: #808080; stroke-dasharray: 3 3; }
.edge { stroke: #808080; }
.gaps { stroke: #e4e4e4; }
.zero { stroke: #0000ff; }
.stems { stroke: #0000ff; stroke-width: 2; }
.heads { stroke: #0000ff; stroke-width: 8; }
.wave { fill: #ff0000; }
.line { stroke-width: 2; }
.thd { stroke: #008000; }
.thdn { stroke: #ff00ff; }

.caption {
  position: absolute;
  padding: 0 4px;
  background: #e4e4e4;
  font-size: 21px;
  font-weight: 400;
  line-height: 25px;
  white-space: pre;
}

.amplitude { top: 18%; left: 33.5%; }
.percent { top: 14%; left: 30%; padding: 0 2px; }
.cumulative { top: 11%; left: 24.6%; }
.sampled { top: 7.5%; left: 34.2%; padding: 0 2px; }

.x-axis {
  display: flex;
  grid-column: 2;
  justify-content: space-between;
  font-size: 11px;
  line-height: 13px;
}

.x-axis li {
  display: flex;
  justify-content: center;
  width: 1px;
  white-space: nowrap;
}

.x-axis li:first-child { justify-content: flex-start; }

.trace { grid-column: 2; line-height: 12px; }
.selected { text-decoration: underline; }
.red { color: #ff0000; }
.green { color: #008000; }
.magenta { color: #ff00ff; }

.axis-name {
  grid-column: 1 / -1;
  padding-left: 8px;
  line-height: 12px;
  text-align: center;
}

/* Page tabs */
.tabs { display: flex; flex: none; height: 18px; }

.grip {
  width: 6px;
  margin: 1px 1px 1px 2px;
  border-right: 1px solid #a0a0a0;
  background: #fff;
}

.tab-nav {
  display: flex;
  gap: 2px;
  height: 17px;
  padding: 2px 1px 1px;
  background: #808080;
}

.tab-nav button {
  display: grid;
  place-items: center;
  width: 14px;
  height: 14px;
  border: 1px solid;
  border-color: #fff #c0c0c0 #c0c0c0 #fff;
  background: #f0f0f0;
}

.tab-nav svg { width: 12px; height: 12px; }

.tab {
  position: relative;
  width: 48px;
  height: 17px;
  color: #000;
  font-size: 12px;
  font-weight: 700;
  line-height: 16px;
}

.tab svg { position: absolute; inset: 0; width: 100%; height: 100%; }
.tab span { position: relative; }

.tab-rest {
  display: flex;
  flex: 1;
  justify-content: flex-end;
  margin-right: 2px;
  border-top: 1px solid #000;
}

.splitter {
  width: 17px;
  height: 7px;
  border: 1px solid;
  border-color: #fff #696969 #696969 #fff;
}
```
